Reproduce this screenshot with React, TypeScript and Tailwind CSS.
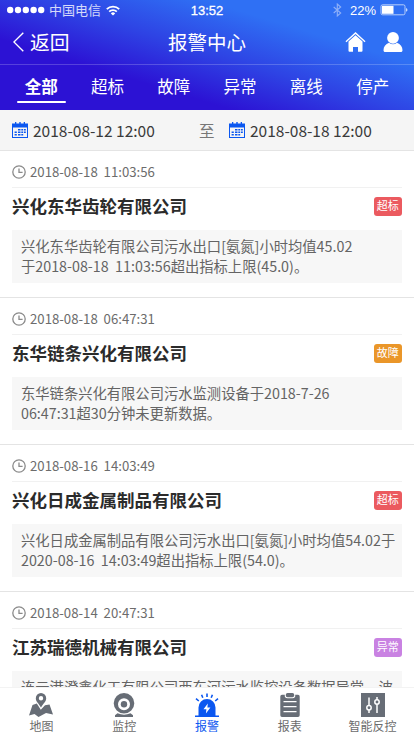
import React from 'react';

const tabs = ['全部', '超标', '故障', '异常', '离线', '停产'];

const alarms = [
  {
    time: '2018-08-18  11:03:56',
    company: '兴化东华齿轮有限公司',
    tag: '超标',
    tagColor: 'bg-[#eb5a5f]',
    lines: ['兴化东华齿轮有限公司污水出口[氨氮]小时均值45.02', '于2018-08-18  11:03:56超出指标上限(45.0)。'],
  },
  {
    time: '2018-08-18  06:47:31',
    company: '东华链条兴化有限公司',
    tag: '故障',
    tagColor: 'bg-[#ea9629]',
    lines: ['东华链条兴化有限公司污水监测设备于2018-7-26', '06:47:31超30分钟未更新数据。'],
  },
  {
    time: '2018-08-16  14:03:49',
    company: '兴化日成金属制品有限公司',
    tag: '超标',
    tagColor: 'bg-[#eb5a5f]',
    lines: ['兴化日成金属制品有限公司污水出口[氨氮]小时均值54.02于', '2020-08-16  14:03:49超出指标上限(54.0)。'],
  },
  {
    time: '2018-08-14  20:47:31',
    company: '江苏瑞德机械有限公司',
    tag: '异常',
    tagColor: 'bg-[#c982e2]',
    lines: ['连云港澄鑫化工有限公司西东河污水监控设备数据异常，波'],
  },
];

const CalendarIcon = () => (
  <svg width="16" height="16" viewBox="0 0 16 16" className="-mt-px shrink-0">
    <path fill="#0b57f0" d="M0 1.5h3V0h1.300v1.500h3V0h1.400v1.500h3V0H13v1.500h3V16H0z" />
    <path fill="#f5f5f5" d="M1 5.500h14V15H1z" />
    <path
      fill="#0b57f0"
      d="M6 7h2.5v1.6H6zM9.3 7h1.9v1.6H9.3zM12 7h1.8v1.6H12zM2.6 9.5h2.2v1.6H2.6zM6 9.5h2.5v1.6H6zM9.3 9.5h1.9v1.6H9.3zM12 9.5h1.8v1.6H12zM2.6 12h2.2v1.6H2.6zM6 12h2.5v1.6H6zM9.3 12h1.9v1.6H9.3z"
    />
  </svg>
);

const ClockIcon = () => (
  <svg width="14" height="14" viewBox="0 0 14 14" fill="none" stroke="#8a8a8a" strokeWidth="1.3">
    <circle cx="7" cy="7" r="6.2" />
    <path d="M7 3.5v3.8h3.6" />
  </svg>
);

const StatusBar = () => (
  <div className="flex h-5 items-center text-[13px] leading-5">
    <div className="flex w-[138px] items-center pl-[7px]">
      <svg width="38" height="8" viewBox="0 0 38 8" fill="#fff">
        <circle cx="3.2" cy="4" r="3.2" />
        <circle cx="11" cy="4" r="3.2" />
        <circle cx="18.8" cy="4" r="3.2" />
        <circle cx="26.6" cy="4" r="3.2" />
        <circle cx="34.2" cy="4" r="3.2" />
      </svg>
      <span className="ml-1 text-white/80">中国电信</span>
      <svg width="14" height="11" viewBox="0 0 14 11" fill="none" stroke="#fff" strokeWidth="1.8" className="ml-[5px]">
        <path d="M.8 4.2a8.8 8.8 0 0 1 12.4 0M3.2 6.7a5.4 5.4 0 0 1 7.6 0" />
        <path fill="#fff" stroke="none" d="M4.8 8.4a3.1 3.1 0 0 1 4.4 0L7 10.6z" />
      </svg>
    </div>
    <div className="flex-1 pt-px text-center font-['Liberation_Sans'] text-[13px] [-webkit-text-stroke:0.3px]">
      13:52
    </div>
    <div className="flex w-[138px] items-center justify-end pr-[6px]">
      <svg width="9" height="14" viewBox="0 0 9 14" fill="none" stroke="#8fb0f8" strokeWidth="1.1">
        <path d="M.7 4l7 6-3.4 3V1l3.4 3-7 6" />
      </svg>
      <span className="ml-2 pt-px font-['Liberation_Sans'] text-[13px]">22%</span>
      <svg width="28" height="12" viewBox="0 0 28 12" className="ml-1">
        <rect x="1" y=".8" width="24" height="10" rx="1.6" fill="none" stroke="#c5d8fc" strokeWidth=".9" />
        <rect x="2" y="1.8" width="11.5" height="8" fill="#fff" />
        <path d="M26 4c2 .6 2 3.2 0 3.8z" fill="#c5d8fc" />
      </svg>
    </div>
  </div>
);

const Header = () => (
  <header className="h-[110px] shrink-0 bg-[linear-gradient(17deg,#2c12d4_30%,#2e43e4_51%,#2f70f4_73%)] text-white">
    <StatusBar />
    <div className="flex h-[45px] items-center border-b border-white/20 text-[19.5px]">
      <div className="flex w-[138px] items-center pl-[13px]">
        <svg width="11" height="20" viewBox="0 0 11 20" fill="none" stroke="#fff" strokeWidth="1.4">
          <path d="M10.3.7L.9 10l9.4 9.3" />
        </svg>
        <span className="ml-[6px] text-[19.8px]">返回</span>
      </div>
      <h1 className="flex-1 text-center">报警中心</h1>
      <div className="flex w-[138px] items-center justify-end pr-[11px]">
        <svg width="21" height="20" viewBox="0 0 20 20" fill="#fff">
          <path d="M10 0l10 9.2-.9 1L10 1.9.9 10.2l-.9-1z" />
          <path d="M10 3.2l7 6.4V18.800a1 1 0 0 1-1 1h-3.500v-4.800h-5v4.800H4a1 1 0 0 1-1-1V9.600z" />
        </svg>
        <svg width="20" height="20" viewBox="0 0 20 20" fill="#fff" className="ml-[17px]">
          <path d="M6 10.800C2.500 12 .5 15 .5 18.200c0 1.200.6 1.800 1.800 1.800h15.400c1.200 0 1.800-.6 1.800-1.800 0-3.200-2-6.200-5.500-7.400a6.500 6.500 0 0 1-8 0z" />
          <circle cx="10" cy="5.900" r="5.900" />
        </svg>
      </div>
    </div>
    <nav className="flex h-[45px] px-2">
      {tabs.map((tab, i) => (
        <div key={tab} className="flex w-[66.3px] flex-col items-center pt-[9px]">
          <span className={i === 0 ? 'text-[16.5px] leading-6 font-bold' : 'text-[16.5px] leading-6'}>{tab}</span>
          {i === 0 && <div className="mt-[3px] h-[2px] w-[49px] rounded-full bg-white" />}
        </div>
      ))}
    </nav>
  </header>
);

const AlarmItem = ({ alarm }: { alarm: (typeof alarms)[number] }) => (
  <article className="h-[147px] shrink-0 border-t border-[#e4e4e4] px-3">
    <div className="flex h-[37px] items-center gap-1 border-b border-[#f1f1f1] pt-[6px] text-[13.2px] whitespace-pre text-[#6c6c6c]">
      <ClockIcon />
      {alarm.time}
    </div>
    <div className="flex h-[42px] items-start justify-between pt-[5px]">
      <h2 className="text-[17.5px] leading-[26px] font-bold text-[#2b2b2b]">{alarm.company}</h2>
      <span className={`mt-[4px] h-[18.5px] w-[28.5px] rounded-[3px] text-center text-[11px] leading-[17px] text-white ${alarm.tagColor}`}>
        {alarm.tag}
      </span>
    </div>
    <div className="h-[53px] bg-[#f7f7f7] px-[9px] pt-[6px] text-[14.3px] leading-5 whitespace-pre text-[#646464]">
      {alarm.lines.map((line) => (
        <p key={line}>{line}</p>
      ))}
    </div>
  </article>
);

const MapIcon = () => (
  <svg width="24" height="24" viewBox="0 0 24 24" fill="#676d76">
    <path fillRule="evenodd" d="M12 0a5.200 5.200 0 0 1 5.200 5.200c0 3.500-3.200 5.500-5.200 9.300-2-3.800-5.200-5.800-5.200-9.300A5.200 5.200 0 0 1 12 0zm0 3a2.200 2.200 0 1 0 0 4.400A2.200 2.200 0 0 0 12 3z" />
    <path d="M3.500 12l4.300-1.500 4 6.300 4.200-4.600 4.500-.7L24 21.500l-7-1.500-7.500 4-4-3L0 22.500z" />
  </svg>
);

const CameraIcon = () => (
  <svg width="24" height="24" viewBox="0 0 24 24" fill="#676d76">
    <path fillRule="evenodd" d="M12 0a10.300 10.300 0 1 1 0 20.600A10.300 10.300 0 0 1 12 0zm0 5.300a6 6 0 1 0 0 12 6 6 0 0 0 0-12z" />
    <circle cx="12" cy="11.300" r="3.200" />
    <path d="M5.500 20.300Q12 23 18.500 20.300l2.500 1.900V24H3v-1.800z" />
  </svg>
);

const SirenIcon = () => (
  <svg width="24" height="24" viewBox="0 0 24 24" fill="#0b57f0">
    <path d="M3.500 22.500v-8a8.500 8.500 0 0 1 17 0v8H24V24H0v-1.500z" />
    <path fill="#fff" d="M12.800 10.500L8.500 16.300h2.900l-.5 4.200 4.500-6h-3z" />
    <path fill="none" stroke="#0b57f0" strokeWidth="1.600" d="M7.800 4.700L6.600 1.700M12 4V.5M16.200 4.700l1.200-3M3.800 8L1 5.600M20.200 8L23 5.600" />
  </svg>
);

const ReportIcon = () => (
  <svg width="24" height="24" viewBox="0 0 24 24" fill="#676d76">
    <path d="M4 1.800h2.800A3 3 0 0 0 9.500 5.300h5A3 3 0 0 0 17.200 1.800H20a1.700 1.700 0 0 1 1.700 1.700v18.800A1.700 1.700 0 0 1 20 24H4a1.700 1.700 0 0 1-1.700-1.700V3.500A1.700 1.700 0 0 1 4 1.800z" />
    <rect x="7.800" y="0" width="8.400" height="4.300" rx="1.700" />
    <path stroke="#fff" strokeWidth="1.200" d="M5.500 8.700h13M5.500 13.700h13M5.500 18.700h13" />
  </svg>
);

const ControlIcon = () => (
  <svg width="24" height="24" viewBox="0 0 24 24" fill="none">
    <path fill="#676d76" d="M0 0h24v24H0z" />
    <g stroke="#fff" strokeWidth="1.500">
      <path d="M8 4.500v7.800M8 17v3M16 4v3M16 11.500V20" />
      <circle cx="8" cy="14.800" r="2.200" />
      <circle cx="16" cy="9" r="2.200" />
    </g>
  </svg>
);

const navItems = [
  { label: '地图', icon: <MapIcon /> },
  { label: '监控', icon: <CameraIcon /> },
  { label: '报警', icon: <SirenIcon />, active: true },
  { label: '报表', icon: <ReportIcon /> },
  { label: '智能反控', icon: <ControlIcon /> },
];

const App = () => {
  return (
    <div className="flex h-[736px] w-[414px] flex-col overflow-hidden bg-white font-['Noto_Sans_CJK_SC',sans-serif]">
      <Header />
      <div className="flex h-10 shrink-0 items-center bg-[#f5f5f5] px-3 pt-px text-[15.5px] text-[#3a3a3a]">
        <CalendarIcon />
        <span className="ml-[5px] w-[166px]">2018-08-12 12:00</span>
        <span className="w-[30px] text-[#777]">至</span>
        <CalendarIcon />
        <span className="ml-[5px]">2018-08-18 12:00</span>
      </div>
      <main className="flex min-h-0 flex-1 flex-col overflow-hidden">
        {alarms.map((alarm) => (
          <AlarmItem key={alarm.time} alarm={alarm} />
        ))}
      </main>
      <footer className="flex h-[49px] shrink-0 border-t border-[#f3f3f3] bg-white">
        {navItems.map((item) => (
          <div key={item.label} className="flex flex-1 flex-col items-center pt-[5px]">
            {item.icon}
            <span className={item.active ? 'text-xs leading-[18px] text-[#0b57f0]' : 'text-xs leading-[18px] text-[#6c6c6c]'}>
              {item.label}
            </span>
          </div>
        ))}
      </footer>
    </div>
  );
};

export default App;
